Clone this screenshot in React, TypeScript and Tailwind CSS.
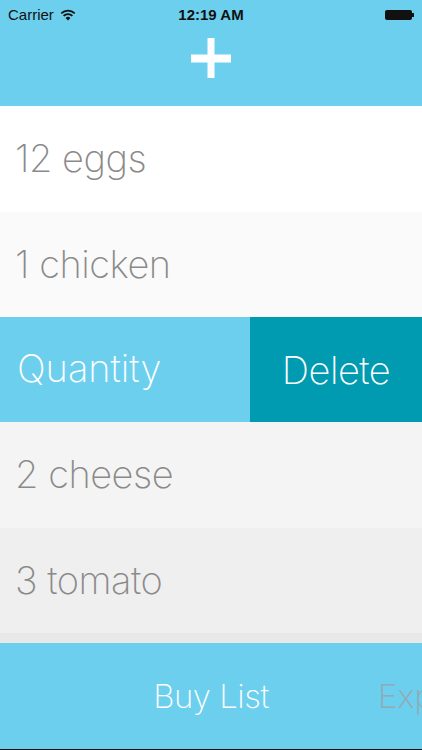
import React from "react";

function Row({ text, bg, h }: { text: string; bg: string; h: string }) {
  return (
    <div className={`${h} flex items-center pl-[15px] pb-[2px] shrink-0 ${bg}`}>
      <span className="text-[38px] font-extralight text-[#8a8a8a] leading-none tracking-[-0.5px] [font-variant-ligatures:none]">{text}</span>
    </div>
  );
}

export default function App() {
  return (
    <div
      className="w-[422px] h-[750px] overflow-hidden flex flex-col bg-white"
      style={{ fontFamily: "Inter, Lato, sans-serif" }}
    >
      <div className="h-[106px] bg-[#6ccfee] flex flex-col shrink-0">
        <div
          className="h-[30px] relative flex items-center px-[8px] text-[#111] text-[15px]"
          style={{ fontFamily: "'Liberation Sans', Arial, sans-serif" }}
        >
          <span>Carrier</span>
          <svg className="ml-[6px]" width="16" height="12" viewBox="0 0 16 12">
            <path d="M8 11.5 L5.6 8.9 A3.4 3.4 0 0 1 10.4 8.9 Z" fill="#111" />
            <path d="M3.6 6.9 A6.2 6.2 0 0 1 12.4 6.9" stroke="#111" strokeWidth="1.8" fill="none" />
            <path d="M1.3 4.4 A9.4 9.4 0 0 1 14.7 4.4" stroke="#111" strokeWidth="1.8" fill="none" />
          </svg>
          <span className="absolute left-0 right-0 text-center font-bold text-[15px]">12:19 AM</span>
          <div className="ml-auto flex items-center">
            <div className="w-[27px] h-[10px] bg-[#111] rounded-[2px]" />
            <div className="w-[2px] h-[4px] bg-[#111]" />
          </div>
        </div>
        <div className="flex-1 flex items-start justify-center pt-[8px]">
          <svg width="40" height="40" viewBox="0 0 40 40">
            <rect x="16.5" y="0" width="7" height="40" fill="#fff" />
            <rect x="0" y="16.5" width="40" height="8" fill="#fff" />
          </svg>
        </div>
      </div>
      <Row text="12 eggs" bg="bg-[#ffffff]" h="h-[106px]" />
      <Row text="1 chicken" bg="bg-[#fafafa]" h="h-[105px]" />
      <div className="h-[105px] flex shrink-0">
        <div className="w-[250px] bg-[#6ccfee] flex items-center pl-[17px] pb-[4px]">
          <span className="text-[38px] font-extralight text-white leading-none">Quantity</span>
        </div>
        <div className="flex-1 bg-[#009bb0] flex items-center justify-center">
          <span className="text-[38px] font-extralight text-white leading-none tracking-[-0.5px]">Delete</span>
        </div>
      </div>
      <Row text="2 cheese" bg="bg-[#f4f4f4]" h="h-[106px]" />
      <Row text="3 tomato" bg="bg-[#efefef]" h="h-[105px]" />
      <div className="h-[10px] bg-[#e8e8e8] shrink-0" />
      <div className="flex-1 bg-[#6ccfee] relative flex items-center justify-center border-b border-[#111]">
        <span className="text-[33px] font-extralight text-white leading-none tracking-[-0.5px]">Buy List</span>
        <span className="absolute left-[378px] text-[33px] font-extralight text-[#93a9b2] leading-none">Export</span>
      </div>
    </div>
  );
}
